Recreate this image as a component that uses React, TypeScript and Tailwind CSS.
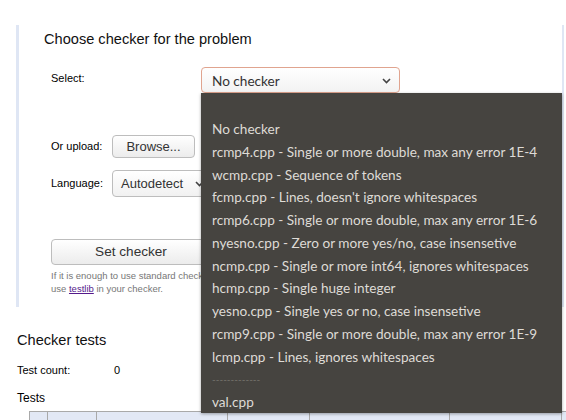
import React from 'react';

const options = [
  'No checker',
  'rcmp4.cpp - Single or more double, max any error 1E-4',
  'wcmp.cpp - Sequence of tokens',
  "fcmp.cpp - Lines, doesn't ignore whitespaces",
  'rcmp6.cpp - Single or more double, max any error 1E-6',
  'nyesno.cpp - Zero or more yes/no, case insensetive',
  'ncmp.cpp - Single or more int64, ignores whitespaces',
  'hcmp.cpp - Single huge integer',
  'yesno.cpp - Single yes or no, case insensetive',
  'rcmp9.cpp - Single or more double, max any error 1E-9',
  'lcmp.cpp - Lines, ignores whitespaces',
];

function Chevron() {
  return (
    <svg width="9" height="6" viewBox="0 0 9 6" className="shrink-0">
      <path d="M1 1 L4.5 4.5 L8 1" fill="none" stroke="#444" strokeWidth="1.6" />
    </svg>
  );
}

export default function App() {
  return (
    <div className="relative w-[566px] h-[420px] overflow-hidden bg-white font-['Liberation_Sans',Arial,sans-serif] text-black">
      {/* checker panel */}
      <div className="mt-[25px] ml-[16px] mr-[2px] h-[282px] border-l-[3px] border-r-2 border-[#dfe6f4] pl-[25px] pt-[5px]">
        <h2 className="text-[14.6px] leading-[18px] text-[#111]">Choose checker for the problem</h2>

        <div className="mt-[19px] ml-[7px] flex items-start">
          <span className="w-[150px] pt-[5px] text-[11px] leading-[13px]">Select:</span>
          <div className="flex h-[26px] w-[199px] items-center justify-between rounded-[4px] border border-[#e0a48f] bg-gradient-to-b from-white to-[#f3f3f3] pl-[10px] pr-[8px] pt-[2px] font-['Lato','DejaVu_Sans',sans-serif] text-[13.6px] text-[#333]">
            <span>No checker</span>
            <Chevron />
          </div>
        </div>

        <div className="mt-[42px] ml-[7px] flex items-center">
          <span className="w-[61px] text-[11px]">Or upload:</span>
          <button className="h-[23px] w-[83px] rounded-[4px] border border-[#bdbdbd] bg-gradient-to-b from-white to-[#ececec] text-[13px] text-[#333]">
            Browse...
          </button>
        </div>

        <div className="mt-[12px] ml-[7px] flex items-center">
          <span className="w-[61px] text-[11px]">Language:</span>
          <div className="flex h-[27px] w-[96px] items-center justify-between rounded-[4px] border border-[#bdbdbd] bg-gradient-to-b from-white to-[#f1f1f1] pl-[8px] pr-[3px] text-[13px] text-[#333]">
            <span>Autodetect</span>
            <Chevron />
          </div>
        </div>

        <button className="mt-[42px] ml-[7px] block h-[26px] w-[160px] rounded-[4px] border border-[#bdbdbd] bg-gradient-to-b from-white to-[#ececec] text-[13.6px] text-[#333]">
          Set checker
        </button>

        <p className="mt-[4px] ml-[7px] w-[160px] whitespace-nowrap text-[9.5px] leading-[13px] text-[#777]">
          If it is enough to use standard checkers, pick one,
          <br />
          use <span className="text-[#551a8b] underline">testlib</span> in your checker.
        </p>
      </div>

      {/* checker tests */}
      <div className="pl-[17px]">
        <h3 className="mt-[24px] text-[14.6px] leading-[18px] text-[#111]">Checker tests</h3>
        <div className="mt-[15px] flex text-[11px] leading-[13px]">
          <span className="w-[97px]">Test count:</span>
          <span>0</span>
        </div>
        <div className="mt-[14px] text-[12px] leading-[14px]">Tests</div>
        <div className="mt-[6px] ml-[12px] grid h-[20px] grid-cols-[18px_49px_131px_82px_140px_112px] border-t border-l border-[#a9a9a9] bg-[#e2e8f5]">
          {[0, 1, 2, 3, 4, 5].map((i) => (
            <div key={i} className="border-r border-[#a9a9a9]" />
          ))}
        </div>
      </div>

      {/* open dropdown list */}
      <div className="absolute left-[201px] top-[93px] w-[361px] h-[320px] bg-[#464440] pt-[25px] pl-[11px] font-['Lato','DejaVu_Sans',sans-serif] text-[13.6px] leading-[22.75px] text-[#dedbd6] shadow-[0_1px_3px_rgba(0,0,0,0.35)]">
        {options.map((o) => (
          <div key={o} className="whitespace-nowrap">{o}</div>
        ))}
        <div className="text-[#77746e] text-[10px]">-------------</div>
        <div>val.cpp</div>
      </div>
    </div>
  );
}
